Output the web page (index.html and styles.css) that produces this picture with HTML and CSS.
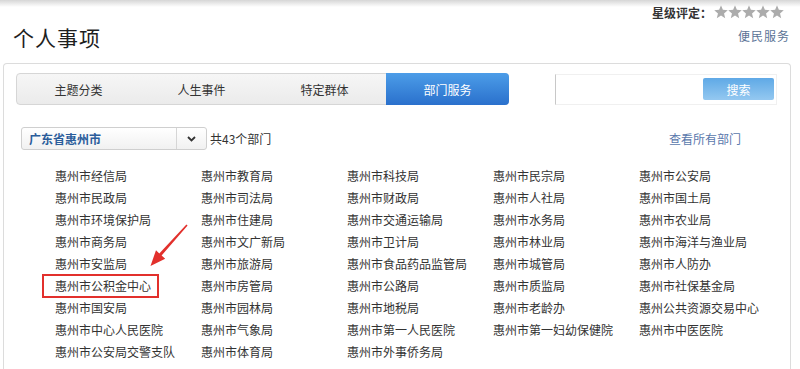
FILE: index.html
```html
<!DOCTYPE html>
<html lang="zh-CN">
<head>
    <meta charset="UTF-8">
    <title>个人事项</title>
    <link rel="stylesheet" href="styles.css">
</head>
<body>
    <div class="top-shadow"></div>
    <div class="header">
        <h1 class="title">个人事项</h1>
        <div class="header-right">
            <div class="rating">
                <span class="rating-label">星级评定：</span>
                <span class="stars">
                    <svg width="14" height="14" viewBox="0 0 24 24"><polygon points="12,0.5 15.2,8.3 23.6,8.9 17.2,14.4 19.2,22.6 12,18.2 4.8,22.6 6.8,14.4 0.4,8.9 8.8,8.3"/></svg>
                    <svg width="14" height="14" viewBox="0 0 24 24"><polygon points="12,0.5 15.2,8.3 23.6,8.9 17.2,14.4 19.2,22.6 12,18.2 4.8,22.6 6.8,14.4 0.4,8.9 8.8,8.3"/></svg>
                    <svg width="14" height="14" viewBox="0 0 24 24"><polygon points="12,0.5 15.2,8.3 23.6,8.9 17.2,14.4 19.2,22.6 12,18.2 4.8,22.6 6.8,14.4 0.4,8.9 8.8,8.3"/></svg>
                    <svg width="14" height="14" viewBox="0 0 24 24"><polygon points="12,0.5 15.2,8.3 23.6,8.9 17.2,14.4 19.2,22.6 12,18.2 4.8,22.6 6.8,14.4 0.4,8.9 8.8,8.3"/></svg>
                    <svg width="14" height="14" viewBox="0 0 24 24"><polygon points="12,0.5 15.2,8.3 23.6,8.9 17.2,14.4 19.2,22.6 12,18.2 4.8,22.6 6.8,14.4 0.4,8.9 8.8,8.3"/></svg>
                </span>
            </div>
            <a class="service-link" href="#">便民服务</a>
        </div>
    </div>

    <div class="panel">
        <div class="toolbar">
            <div class="tabs">
                <a class="tab" href="#">主题分类</a>
                <a class="tab" href="#">人生事件</a>
                <a class="tab" href="#">特定群体</a>
                <a class="tab active" href="#">部门服务</a>
            </div>
            <div class="search">
                <input type="text" class="search-input">
                <button class="search-btn">搜索</button>
            </div>
        </div>

        <div class="filter-row">
            <div class="select">
                <span class="select-text">广东省惠州市</span>
                <span class="select-arrow">
                    <svg width="9" height="6" viewBox="0 0 9 6"><path d="M1 1 L4.5 4.5 L8 1" fill="none" stroke="#333" stroke-width="1.8"/></svg>
                </span>
            </div>
            <span class="count">共43个部门</span>
            <a class="all-link" href="#">查看所有部门</a>
        </div>

        <ul class="dept-list">
            <li>惠州市经信局</li>
            <li>惠州市教育局</li>
            <li>惠州市科技局</li>
            <li>惠州市民宗局</li>
            <li>惠州市公安局</li>
            <li>惠州市民政局</li>
            <li>惠州市司法局</li>
            <li>惠州市财政局</li>
            <li>惠州市人社局</li>
            <li>惠州市国土局</li>
            <li>惠州市环境保护局</li>
            <li>惠州市住建局</li>
            <li>惠州市交通运输局</li>
            <li>惠州市水务局</li>
            <li>惠州市农业局</li>
            <li>惠州市商务局</li>
            <li>惠州市文广新局</li>
            <li>惠州市卫计局</li>
            <li>惠州市林业局</li>
            <li>惠州市海洋与渔业局</li>
            <li>惠州市安监局</li>
            <li>惠州市旅游局</li>
            <li>惠州市食品药品监管局</li>
            <li>惠州市城管局</li>
            <li>惠州市人防办</li>
            <li><span class="marked">惠州市公积金中心</span></li>
            <li>惠州市房管局</li>
            <li>惠州市公路局</li>
            <li>惠州市质监局</li>
            <li>惠州市社保基金局</li>
            <li>惠州市国安局</li>
            <li>惠州市园林局</li>
            <li>惠州市地税局</li>
            <li>惠州市老龄办</li>
            <li>惠州公共资源交易中心</li>
            <li>惠州市中心人民医院</li>
            <li>惠州市气象局</li>
            <li>惠州市第一人民医院</li>
            <li>惠州市第一妇幼保健院</li>
            <li>惠州市中医医院</li>
            <li>惠州市公安局交警支队</li>
            <li>惠州市体育局</li>
            <li>惠州市外事侨务局</li>
        </ul>
    </div>

    <!-- annotation arrow pointing at the marked item -->
    <svg class="note-arrow" width="60" height="60" viewBox="140 215 60 60">
        <polygon fill="#e2302c" points="150.5,266 165.2,258.8 161.6,255.6 187.6,225.4 186.4,224.6 159.3,253.4 156,250.2"/>
    </svg>
</body>
</html>
```

FILE: styles.css
```css
body {
    margin: 0;
    padding: 0;
    font-family: "Noto Sans CJK SC", "Liberation Sans", sans-serif;
    font-size: 12px;
    color: #333;
    background-color: #fff;
    height: 369px;
    overflow: hidden;
    position: relative;
}
a {
    text-decoration: none;
}
.top-shadow {
    position: absolute;
    left: 0;
    right: 0;
    top: 0;
    height: 7px;
    background: linear-gradient(#d6d6d6, rgba(255, 255, 255, 0));
}
.header {
    display: flex;
    justify-content: space-between;
    height: 63px;
    padding: 0 10px 0 13px;
}
.title {
    margin: 0;
    padding-top: 23px;
    font-size: 21px;
    font-weight: normal;
    color: #1e1e1e;
    line-height: 28px;
    letter-spacing: 1px;
}
.header-right {
    display: flex;
    flex-direction: column;
    align-items: flex-end;
    padding-top: 4px;
}
.rating {
    display: flex;
    align-items: center;
    height: 16px;
    margin-right: 6px;
}
.rating-label {
    font-weight: bold;
    color: #333;
    font-size: 12px;
}
.stars {
    display: flex;
    gap: 0;
    margin-left: 2px;
}
.stars svg {
    fill: #acacac;
}
.service-link {
    margin-top: 7px;
    color: #5b7396;
    font-size: 12px;
    letter-spacing: 1px;
}
.panel {
    margin: 0 9px 0 3px;
    border: 1px solid #dcdcdc;
    border-bottom: none;
    border-radius: 4px 4px 0 0;
    padding: 9px 12px 0 12px;
    height: 320px;
    box-sizing: border-box;
}
.toolbar {
    display: flex;
    align-items: center;
}
.tabs {
    display: flex;
    width: 493px;
    height: 32px;
    border: 1px solid #d6d6d6;
    border-radius: 4px;
    background: linear-gradient(#f6f6f6, #ebebeb);
    box-sizing: border-box;
}
.tab {
    flex: 1;
    display: flex;
    align-items: center;
    justify-content: center;
    color: #333;
    font-size: 12px;
}
.tab.active {
    margin: -1px -1px -1px 0;
    background: linear-gradient(#4c9de8, #2a70cc);
    color: #fff;
    border-radius: 0 4px 4px 0;
}
.search {
    display: flex;
    align-items: center;
    justify-content: space-between;
    margin-left: 46px;
    width: 222px;
    height: 31px;
    border: 1px solid #f0f0f0;
    border-left: 1px solid #c8c8c8;
    box-sizing: border-box;
}
.search-input {
    border: none;
    outline: none;
    width: 140px;
    height: 24px;
    background: transparent;
}
.search-btn {
    width: 71px;
    height: 22px;
    margin-right: 2px;
    border: none;
    border-radius: 2px;
    background: linear-gradient(#5fa9e6, #94c8f0);
    color: #fff;
    font-family: "Noto Sans CJK SC", sans-serif;
    font-size: 12px;
    padding: 0;
}
.filter-row {
    display: flex;
    align-items: center;
    margin-top: 22px;
    padding-left: 5px;
}
.select {
    display: flex;
    width: 186px;
    height: 23px;
    border: 1px solid #cfcfcf;
    border-radius: 3px;
    background: linear-gradient(#ffffff, #f1f1f1);
    box-sizing: border-box;
}
.select-text {
    flex: 1;
    display: flex;
    align-items: center;
    padding-left: 7px;
    color: #2b5d9b;
    font-weight: bold;
    font-size: 12px;
}
.select-arrow {
    width: 29px;
    display: flex;
    align-items: center;
    justify-content: center;
    border-left: 1px solid #d6d6d6;
}
.count {
    margin-left: 3px;
    color: #333;
}
.all-link {
    margin-left: auto;
    margin-right: 37px;
    color: #5a78ac;
}
.dept-list {
    list-style: none;
    margin: 15px 0 0 0;
    padding: 0 0 0 39px;
    display: grid;
    grid-template-columns: repeat(5, 146px);
}
.dept-list li {
    height: 22px;
    line-height: 22px;
    white-space: nowrap;
    color: #333;
}
.marked {
    position: relative;
}
.marked::after {
    content: "";
    position: absolute;
    left: -13px;
    right: -8px;
    top: -3px;
    bottom: -4px;
    border: 2px solid #e2302c;
}
.note-arrow {
    position: absolute;
    left: 140px;
    top: 215px;
}
```
